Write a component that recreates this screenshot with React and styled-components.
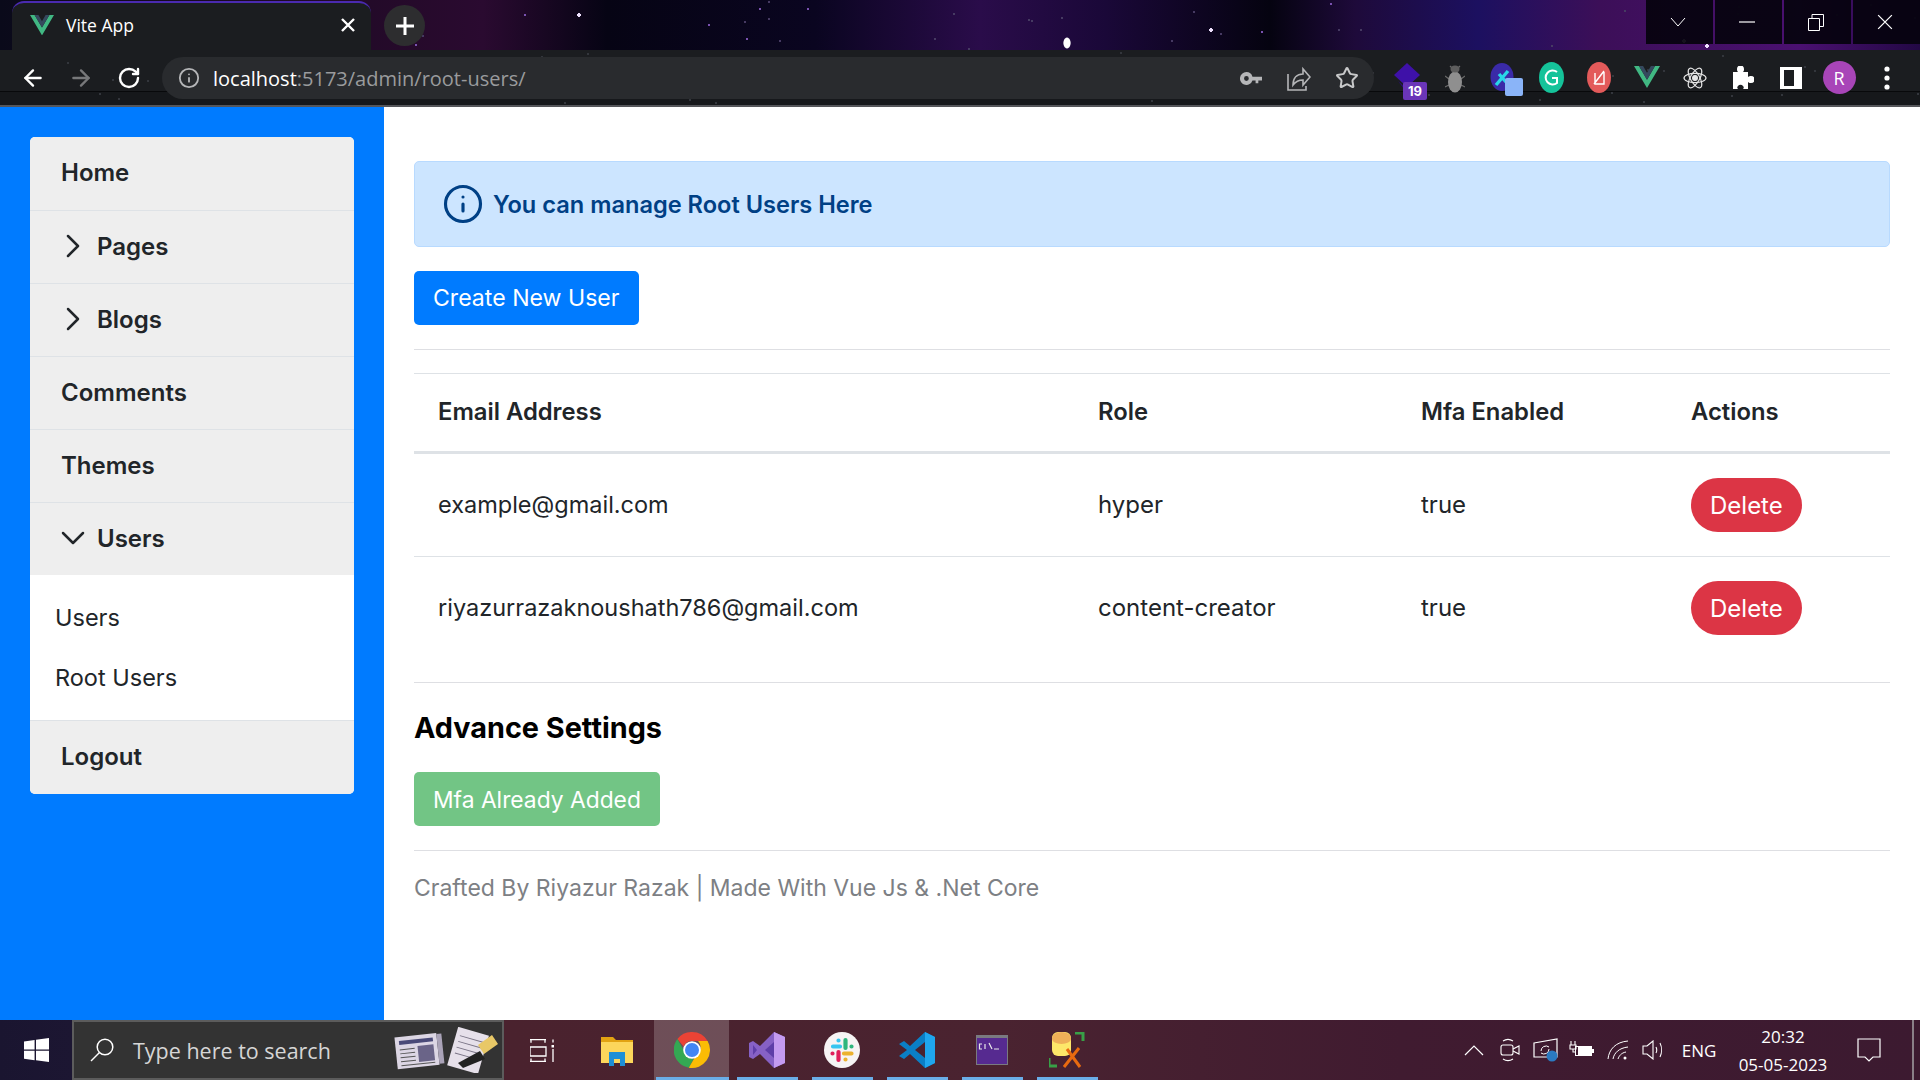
import React from "react";
import styled, { createGlobalStyle } from "styled-components";
import { ChevronRight, ChevronDown, Info, ArrowLeft, ArrowRight, RotateCw, Star } from "lucide-react";

const starField = (count, width, height, seed, faint) => {
  const spots = [];
  let n = seed;
  for (let i = 0; i < count; i++) {
    n = (n * 9301 + 49297) % 233280;
    const x = Math.round((n / 233280) * width);
    n = (n * 9301 + 49297) % 233280;
    const y = Math.round((n / 233280) * height);
    const bright = !faint && i % 9 === 0;
    const tone = faint ? "#33363c" : bright ? "#f0e2ff" : i % 3 === 0 ? "#7a52b0" : "#463a62";
    spots.push(`radial-gradient(circle ${bright ? 2 : 1}px at ${x}px ${y}px, ${tone} 99%, transparent)`);
  }
  return spots.join(",");
};

const GlobalStyle = createGlobalStyle`
  html, body {
    margin: 0;
    padding: 0;
    background: #fff;
  }
  * {
    box-sizing: border-box;
  }
  body {
    font-family: Inter, "Open Sans", sans-serif;
    color: #212529;
  }
`;

const Screen = styled.div`
  width: 1920px;
  height: 1080px;
  display: flex;
  flex-direction: column;
  overflow: hidden;
`;

// BROWSER CHROME
const BrowserFrame = styled.header`
  height: 107px;
  flex: none;
  display: flex;
  flex-direction: column;
  background-color: #0a0a1a;
`;

const TabStrip = styled.div`
  height: 50px;
  display: flex;
  align-items: flex-start;
  background-image: radial-gradient(ellipse 4px 6px at 1067px 43px, #fff 80%, transparent),
    ${starField(48, 1920, 50, 17)},
    linear-gradient(90deg, #0a0a1a 0, #250a2a 400px, #2a0a30 483px, #060414 607px, #0a0520 815px, #2a0c4a 980px, #1a0838 1105px, #050310 1270px, #1e0a3a 1355px, #1c1060 1478px, #3c0f58 1600px, #4a1070 1800px, #220844 1920px);
`;

const Tab = styled.div`
  width: 359px;
  height: 49px;
  margin: 1px 0 0 12px;
  padding: 0 16px 3px 18px;
  display: flex;
  align-items: center;
  gap: 12px;
  background: #1b1d20;
  border-top: 2px solid #4a2ab0;
  border-radius: 12px 12px 0 0;
  color: #fff;
  font-family: "Open Sans", sans-serif;
  font-size: 17.5px;
`;

const TabTitle = styled.span`
  flex: 1;
`;

const NewTab = styled.div`
  width: 41px;
  height: 41px;
  margin: 5px 0 0 13px;
  border-radius: 50%;
  background: #2d2d2f;
  display: flex;
  align-items: center;
  justify-content: center;
`;

const Caption = styled.div`
  margin-left: auto;
  display: flex;
  gap: 2px;
`;

const CaptionButton = styled.div`
  width: 67px;
  height: 44px;
  padding-right: 3px;
  background: rgba(6, 3, 15, 0.94);
  display: flex;
  align-items: center;
  justify-content: center;
`;

const Toolbar = styled.div`
  height: 57px;
  display: flex;
  align-items: flex-start;
  padding: 0 9px;
  border-bottom: 2px solid #55565a;
  background-image: ${starField(40, 1920, 55, 91, true)},
    linear-gradient(180deg, #1b1d20 0, #1b1d20 41px, #08090b 41px, #08090b 42px, #16181b 42px);
`;

const ToolSlot = styled.div`
  width: 48px;
  height: 55px;
  flex: none;
  display: flex;
  align-items: center;
  justify-content: center;
  position: relative;
`;

const Omnibox = styled.div`
  width: 1212px;
  height: 42px;
  margin: 7px 9px 0 9px;
  padding: 0 3px 0 16px;
  flex: none;
  display: flex;
  align-items: center;
  border-radius: 21px;
  background: #292b2e;
`;

const UrlText = styled.div`
  margin-left: 13px;
  flex: 1;
  font-family: "Open Sans", sans-serif;
  font-size: 20px;
  color: #9a9b9d;
  span {
    color: #fff;
  }
`;

const OmniAction = styled.div`
  width: 48px;
  display: flex;
  justify-content: center;
`;

const Badge = styled.span`
  position: absolute;
  left: 20px;
  top: 32px;
  width: 24px;
  height: 18px;
  border-radius: 2px;
  background: #6a35b8;
  color: #fff;
  font-size: 13px;
  font-weight: 700;
  text-align: center;
  line-height: 18px;
`;

const ExtSquare = styled.span`
  position: absolute;
  left: 26px;
  top: 28px;
  width: 18px;
  height: 18px;
  border-radius: 2px;
  background: #8ab4f8;
`;

const Avatar = styled.div`
  width: 33px;
  height: 33px;
  border-radius: 50%;
  background: #a845b8;
  color: #fff;
  font-family: "Open Sans", sans-serif;
  font-size: 18px;
  display: flex;
  align-items: center;
  justify-content: center;
`;

// PAGE
const Page = styled.div`
  flex: 1;
  min-height: 0;
  display: flex;
  background: #fff;
`;

const Sidebar = styled.aside`
  width: 384px;
  flex: none;
  padding: 30px;
  background: #007bff;
`;

const Menu = styled.nav`
  border-radius: 5px;
  overflow: hidden;
  background: #fff;
`;

const MenuRow = styled.div`
  height: 73px;
  padding-left: ${(props) => (props.$nested ? "23px" : "31px")};
  padding-bottom: 2px;
  display: flex;
  align-items: center;
  gap: 4px;
  background: #eee;
  font-size: 24px;
  font-weight: 600;
  color: #212529;
  & + & {
    border-top: 1px solid #dee2e6;
  }
`;

const SubMenu = styled.div`
  height: 145px;
  padding: 12px 0 0 25px;
`;

const LogoutRow = styled(MenuRow)`
  height: 74px;
  padding-left: 31px;
  border-top: 1px solid #dee2e6;
`;

const SubItem = styled.div`
  height: 60px;
  display: flex;
  align-items: center;
  font-size: 23.5px;
  color: #212529;
`;

const Content = styled.main`
  flex: 1;
  padding: 54px 30px 0;
`;

const Alert = styled.div`
  height: 86px;
  padding: 0 27px;
  display: flex;
  align-items: center;
  gap: 9px;
  background: #cce5ff;
  border: 1px solid #b8daff;
  border-radius: 5px;
  color: #004085;
  font-size: 23.6px;
  font-weight: 600;
`;

const Button = styled.button`
  height: 54px;
  padding: 0 19px;
  border: none;
  border-radius: ${(props) => (props.$pill ? "27px" : "5px")};
  background: ${(props) => props.$color};
  color: #fff;
  font-family: inherit;
  font-size: ${(props) => (props.$pill ? "24px" : "23.1px")};
  display: block;
`;

const CreateButton = styled(Button)`
  margin-top: 24px;
`;

const Rule = styled.hr`
  margin: ${(props) => props.$margin};
  border: none;
  border-top: 1px solid #dedfe3;
`;

const UsersTable = styled.table`
  width: 100%;
  table-layout: fixed;
  border-collapse: separate;
  border-spacing: 0;
  border-top: 1px solid #dee2e6;
`;

const HeadCell = styled.th`
  padding: 19px 24px 21px;
  line-height: 37px;
  text-align: left;
  font-size: 23.8px;
  font-weight: 600;
  color: #212529;
  border-bottom: 3px solid #dee2e6;
  width: ${(props) => props.$width};
`;

const Cell = styled.td`
  padding: 24px;
  font-size: 24px;
  color: #212529;
  border-bottom: ${(props) => (props.$last ? "none" : "1px solid #dee2e6")};
`;

const TextCell = styled(Cell)`
  padding-bottom: 26px;
`;

const EmailCell = styled(TextCell)`
  font-size: 23.5px;
`;

const SectionTitle = styled.h2`
  margin: 0;
  height: 40px;
  line-height: 40px;
  font-size: 28.8px;
  font-weight: 700;
  color: #000;
`;

const FadedButton = styled(Button)`
  margin-top: 24px;
  font-size: 22.8px;
  opacity: 0.65;
`;

const Footer = styled.div`
  font-size: 23px;
  line-height: 36px;
  color: #7d8084;
`;

// TASKBAR
const Taskbar = styled.footer`
  height: 60px;
  flex: none;
  display: flex;
  background: linear-gradient(90deg, #1a1530 0, #1c1632 72px, #4a222e 504px, #4a2330 1000px, #401b30 1400px, #3c1a30 1920px);
`;

const StartButton = styled.div`
  width: 72px;
  display: flex;
  align-items: center;
  justify-content: center;
`;

const SearchBox = styled.div`
  width: 432px;
  padding: 0 4px 0 16px;
  display: flex;
  align-items: center;
  gap: 19px;
  background: #333;
  border: 2px solid #5c5c5c;
  color: #d6d6d6;
  font-family: "Open Sans", sans-serif;
  font-size: 21.5px;
`;

const SearchText = styled.span`
  flex: 1;
`;

const TaskIcon = styled.div`
  width: 75px;
  position: relative;
  display: flex;
  align-items: center;
  justify-content: center;
  background: ${(props) => (props.$active ? "rgba(255,255,255,0.2)" : "transparent")};
  &::after {
    content: "";
    display: ${(props) => (props.$open ? "block" : "none")};
    position: absolute;
    bottom: 0;
    left: ${(props) => (props.$active ? "2px" : "8px")};
    right: ${(props) => (props.$active ? "0" : "6px")};
    height: 3px;
    background: #6aaee8;
  }
`;

const Tray = styled.div`
  margin-left: auto;
  display: flex;
  align-items: stretch;
  color: #fff;
  font-family: "Open Sans", sans-serif;
`;

const TraySlot = styled.div`
  width: 36px;
  display: flex;
  align-items: center;
  justify-content: center;
`;

const Lang = styled.div`
  width: 54px;
  display: flex;
  align-items: center;
  justify-content: center;
  font-size: 17px;
`;

const Clock = styled.div`
  width: 114px;
  display: flex;
  flex-direction: column;
  align-items: center;
  justify-content: center;
  gap: 5px;
  font-size: 17px;
  line-height: 23px;
`;

const Notify = styled.div`
  width: 58px;
  display: flex;
  align-items: center;
  justify-content: center;
`;

const ShowDesktop = styled.div`
  width: 8px;
  margin-left: 14px;
  border-left: 2px solid #8a7f88;
`;

// DRAWN ICONS
const VueLogo = ({ size = 24 }) => (
  <svg width={size} height={size * 0.85} viewBox="0 0 24 20.4">
    <polygon points="0,0 4.6,0 12,12.6 19.4,0 24,0 12,20.4" fill="#41b883" />
    <polygon points="4.6,0 8.4,0 12,6.2 15.6,0 19.4,0 12,12.6" fill="#35495e" />
  </svg>
);

const KeyIcon = () => (
  <svg width="22" height="15" viewBox="0 0 24 16" fill="#b5b6b8">
    <path d="M7 1a7 7 0 1 0 6.6 9.2H17v3h3v-3h4V6H13.6A7 7 0 0 0 7 1zm0 4.4a2.6 2.6 0 1 1 0 5.2 2.6 2.6 0 0 1 0-5.2z" />
  </svg>
);

const ShareIcon = () => (
  <svg width="24" height="28" viewBox="0 0 24 28" fill="none" stroke="#b5b6b8" strokeWidth="1.6">
    <path d="M1 10v16h18v-4" />
    <path d="M6 21c0-7 4-11 10-11V5l7 8-7 8v-5c-4 0-7 1-10 5z" />
  </svg>
);

const CloseIcon = ({ size = 14, width = 2.4 }) => (
  <svg width={size} height={size} viewBox="0 0 14 14" stroke="#fff" strokeWidth={width}>
    <path d="M1 1l12 12M13 1L1 13" />
  </svg>
);

const PlusIcon = () => (
  <svg width="20" height="20" viewBox="0 0 20 20" stroke="#fff" strokeWidth="3">
    <path d="M10 1v18M1 10h18" />
  </svg>
);

const CaptionChevron = () => (
  <svg width="16" height="10" viewBox="0 0 16 10" fill="none" stroke="#fff">
    <path d="M1 1l7 8 7-8" />
  </svg>
);

const CaptionMin = () => (
  <svg width="16" height="2" viewBox="0 0 16 2" stroke="#fff" strokeWidth="1.2">
    <path d="M0 1h16" />
  </svg>
);

const CaptionRestore = () => (
  <svg width="16" height="17" viewBox="0 0 16 17" fill="none" stroke="#fff">
    <path d="M.5 4.5h11v12H.5zM4 4.5V.5h11.5v12h-4" />
  </svg>
);

const DiamondExt = () => (
  <svg width="26" height="30" viewBox="0 0 26 30">
    <polygon points="13,0 26,12 13,24 0,12" fill="#3e11a8" />
    <polygon points="4,18 13,26 22,18 13,30" fill="#2a0d78" />
  </svg>
);

const BugExt = () => (
  <svg width="20" height="30" viewBox="0 0 20 30">
    <path d="M5 3l3 3M15 3l-3 3M0 13l4 3M20 13l-4 3M0 24l4-2M20 24l-4-2" stroke="#6a6a6a" strokeWidth="1.2" />
    <ellipse cx="10" cy="19" rx="7" ry="10.500" fill="#8f8f8f" />
    <ellipse cx="10" cy="6" rx="4.500" ry="3.500" fill="#5e5e5e" />
  </svg>
);

const CrossExt = () => (
  <svg width="26" height="32" viewBox="0 0 26 32">
    <ellipse cx="12" cy="15" rx="11.500" ry="14" fill="#3a2aa8" />
    <path d="M6 23L18 9M9 12l7 8" stroke="#29d6e8" strokeWidth="3.4" />
  </svg>
);

const GrammarlyExt = () => (
  <svg width="25" height="31" viewBox="0 0 25 31">
    <ellipse cx="12.500" cy="15.500" rx="12.500" ry="15.500" fill="#15c39a" />
    <path d="M18 10a7 7 0 1 0 0 11V16h-5" fill="none" stroke="#fff" strokeWidth="2" />
  </svg>
);

const RedExt = () => (
  <svg width="24" height="31" viewBox="0 0 24 31">
    <ellipse cx="12" cy="15.500" rx="12" ry="15.500" fill="#e35a5a" />
    <path d="M7 22L17 9M8 11v11h9V10" fill="none" stroke="#fff" strokeWidth="1.4" />
  </svg>
);

const ReactExt = () => (
  <svg width="24" height="26" viewBox="-12 -13 24 26" fill="none" stroke="#e6e6e6" strokeWidth="1.2">
    <ellipse rx="11" ry="4.600" />
    <ellipse rx="11" ry="4.600" transform="rotate(60)" />
    <ellipse rx="11" ry="4.600" transform="rotate(120)" />
    <circle r="2.400" fill="#e6e6e6" />
  </svg>
);

const PuzzleExt = () => (
  <svg width="22" height="24" viewBox="0 0 22 24" fill="#fff">
    <path d="M1 6h5c-1-1-1-2-1-3a3.400 3.400 0 0 1 7 0c0 1 0 2-1 3h5v5c1-1 2-1 3-1a3.400 3.400 0 0 1 0 7c-1 0-2 0-3-1v7h-5c1-1 1-2 0-3a3 3 0 0 0-5 0c-1 1-1 2 0 3H1z" />
  </svg>
);

const PanelExt = () => (
  <svg width="22" height="22" viewBox="0 0 22 22">
    <path d="M0 0h22v22H0zM4 3v16h10V3z" fill="#fff" fillRule="evenodd" />
  </svg>
);

const MoreExt = () => (
  <svg width="6" height="26" viewBox="0 0 6 26" fill="#fff">
    <circle cx="3" cy="4" r="2.600" />
    <circle cx="3" cy="13" r="2.600" />
    <circle cx="3" cy="22" r="2.600" />
  </svg>
);

const WindowsLogo = () => (
  <svg width="25" height="24" viewBox="0 0 25 24" fill="#fff">
    <path d="M0 3.400l10.600-1.500v9.500H0zM12 1.700L25 0v11.400H12zM0 12.800h10.600v9.400L0 20.700zM12 12.800h13V24l-13-1.800z" />
  </svg>
);

const MagnifierIcon = () => (
  <svg width="24" height="24" viewBox="0 0 24 24" fill="none" stroke="#fff" strokeWidth="1.5">
    <circle cx="15" cy="9" r="7.800" />
    <path d="M9.500 14.500L1 23" />
  </svg>
);

const NewsIcon = () => (
  <svg width="104" height="46" viewBox="0 0 104 46">
    <g transform="rotate(-6 24 24)">
      <rect x="2" y="8" width="42" height="32" fill="#dcd6e4" />
      <rect x="44" y="9" width="5" height="30" fill="#aaa3b8" />
      <rect x="6" y="12" width="34" height="4" fill="#4a4a78" />
      <rect x="24" y="19" width="16" height="16" fill="#6a6488" />
      <path d="M6 21h15M6 25h15M6 29h15M6 33h15M6 37h34" stroke="#555" strokeWidth="1" />
    </g>
    <g transform="rotate(16 76 24)">
      <rect x="58" y="4" width="32" height="40" fill="#e6e0ea" />
      <path d="M62 12h24M62 18h24M62 24h24M62 30h18" stroke="#7a7486" strokeWidth="1" />
    </g>
    <path d="M64 36l22-12 5 8-22 9z" fill="#222" />
    <path d="M84 18l14-10 6 9-14 10z" fill="#e8c867" />
  </svg>
);

const TaskViewIcon = () => (
  <svg width="24" height="23" viewBox="0 0 24 23" fill="none" stroke="#fff" strokeWidth="1.300">
    <path d="M0 .7h16M1 .7v3M15 .7v3M0 8h16v9H0zM1 19.500v3M15 19.500v3M0 22.300h16M23 .5v3M23 10v13" />
    <path d="M21.500 6h3v2.500h-3z" fill="#fff" stroke="none" />
  </svg>
);

const FolderIcon = () => (
  <svg width="32" height="32" viewBox="0 0 32 32">
    <path d="M0 3h12l3 3h17v5H0z" fill="#e2a312" />
    <rect y="8" width="32" height="21" fill="#fcd65b" />
    <path d="M8 32V18h16v14h-5v-7h-6v7z" fill="#1d8fd6" />
  </svg>
);

const ChromeIcon = () => (
  <svg width="36" height="36" viewBox="0 0 36 36">
    <path d="M18 0a18 18 0 0 1 15.600 9H18a9 9 0 0 0-8.400 5.600L3.400 7A18 18 0 0 1 18 0z" fill="#ea4335" />
    <path d="M3.400 7l7 12.200a9 9 0 0 0 9.400 7.600L14.800 35.700A18 18 0 0 1 3.400 7z" fill="#34a853" />
    <path d="M33.600 9A18 18 0 0 1 14.800 35.700l7.400-12.700A9 9 0 0 0 24 9z" fill="#fbbc05" />
    <circle cx="18" cy="18" r="8.800" fill="#fff" />
    <circle cx="18" cy="18" r="7" fill="#4285f4" />
  </svg>
);

const VisualStudioIcon = () => (
  <svg width="36" height="36" viewBox="0 0 36 36">
    <path d="M25 0l11 5v26l-11 5-14-14-7 5-4-2V11l4-2 7 5z" fill="#8661c5" />
    <path d="M25 0l11 5v26l-11 5z" fill="#c49bf0" />
    <path d="M25 10v16l-9-8zM4 13v10l4-5z" fill="#5e3ea8" />
  </svg>
);

const SlackIcon = () => (
  <svg width="36" height="36" viewBox="0 0 36 36" strokeWidth="4.200" strokeLinecap="round" fill="none">
    <circle cx="18" cy="18" r="18" fill="#f6f4f4" />
    <path d="M9 14.500h7M14.500 8.500h.01" stroke="#36c5f0" />
    <path d="M21.500 8v8M27.500 14.500h.01" stroke="#2eb67d" />
    <path d="M20 21.500h7.500M21.500 27.500h.01" stroke="#ecb22e" />
    <path d="M14.500 20v8M8.500 21.500h.01" stroke="#e01e5a" />
  </svg>
);

const VsCodeIcon = () => (
  <svg width="36" height="36" viewBox="0 0 36 36">
    <path d="M26 0l10 5v26l-10 5-15-14-6 5-5-3 8-6-8-6 5-3 6 5z" fill="#0a7fc6" />
    <path d="M26 0l10 5v26l-10 5z" fill="#1fa6ee" />
    <path d="M26 10v16l-10-8z" fill="#4a222e" />
  </svg>
);

const TerminalIcon = () => (
  <svg width="32" height="30" viewBox="0 0 32 30">
    <rect width="32" height="30" fill="#7a7a80" />
    <rect x="1" y="3" width="30" height="26" fill="#562a90" />
    <path d="M6 9H3.500v5H6M9 9v5M13 8l3 6M18 14h5" stroke="#e8e8e8" strokeWidth="1.200" fill="none" />
  </svg>
);

const DatabaseIcon = () => (
  <svg width="36" height="36" viewBox="0 0 36 36">
    <rect x="3" y="0" width="19" height="24" rx="6" fill="#fde769" />
    <path d="M3 6a9.500 6 0 0 1 19 0v1a9.500 5 0 0 1-19 0z" fill="#eeb058" />
    <path d="M26 1h8v8M0 26v8h8" fill="none" stroke="#38a047" strokeWidth="3" />
    <path d="M15 35l15-19M18 17l13 18" stroke="#e86a10" strokeWidth="3" fill="none" />
  </svg>
);

const TrayChevron = () => (
  <svg width="20" height="11" viewBox="0 0 20 11" fill="none" stroke="#fff" strokeWidth="1.200">
    <path d="M1 10l9-9 9 9" />
  </svg>
);

const CameraIcon = () => (
  <svg width="20" height="24" viewBox="0 0 20 24" fill="none" stroke="#fff" strokeWidth="1.100">
    <rect x="1" y="7" width="12" height="10" rx="2" />
    <path d="M13 11l6-3v8l-6-3M3 3c3-2 7-2 10 0M3 21c3 2 7 2 10 0" />
  </svg>
);

const SyncIcon = () => (
  <svg width="26" height="24" viewBox="0 0 26 24">
    <path d="M1 5l23-4v18H1z" fill="none" stroke="#fff" strokeWidth="1.200" />
    <path d="M8 13a5 5 0 0 1 8-4M16 11a5 5 0 0 1-8 4" fill="none" stroke="#fff" />
    <circle cx="19" cy="18" r="5.500" fill="#2b7ac2" />
  </svg>
);

const BatteryIcon = () => (
  <svg width="26" height="18" viewBox="0 0 26 18" fill="none" stroke="#fff">
    <path d="M2 0v4M6 0v4M1 4h6v4H1zM4 8v3h3" strokeWidth="1.100" />
    <rect x="6.500" y="5.500" width="16" height="9" />
    <rect x="9" y="6" width="13" height="8" fill="#fff" stroke="none" />
    <rect x="23" y="8" width="2" height="4" fill="#fff" stroke="none" />
  </svg>
);

const WifiIcon = () => (
  <svg width="22" height="20" viewBox="0 0 22 20" fill="none" stroke="#fff" strokeWidth="1">
    <path d="M1 19C2 9 9 2 21 1M6 19c1-6 6-11 15-12M11 19c1-3 3-6 8-7" />
    <circle cx="18" cy="18" r="1.500" fill="#fff" stroke="none" />
  </svg>
);

const VolumeIcon = () => (
  <svg width="24" height="20" viewBox="0 0 24 20" fill="none" stroke="#fff" strokeWidth="1.100">
    <path d="M1 6h4l6-5v18l-6-5H1zM14 7c1 2 1 4 0 6M18 3c2 4 2 10 0 14" />
  </svg>
);

const BubbleIcon = () => (
  <svg width="24" height="24" viewBox="0 0 24 24" fill="none" stroke="#fff" strokeWidth="1.200">
    <path d="M1 1h22v18h-7l-4 4-4-4H1z" />
  </svg>
);

const menuChevronProps = { size: 40, strokeWidth: 1.5, color: "#212529" };
const extensions = [
  <DiamondExt key="a" />,
  <BugExt key="b" />,
  <CrossExt key="c" />,
  <GrammarlyExt key="d" />,
  <RedExt key="e" />,
  <VueLogo key="f" size={26} />,
  <ReactExt key="g" />,
  <PuzzleExt key="h" />,
  <PanelExt key="i" />,
  <Avatar key="j">R</Avatar>,
  <MoreExt key="k" />,
];

const users = [
  { email: "example@gmail.com", role: "hyper", mfa: "true" },
  { email: "riyazurrazaknoushath786@gmail.com", role: "content-creator", mfa: "true" },
];

const App = () => {
  return (
    <Screen>
      <GlobalStyle />
      <BrowserFrame>
        <TabStrip>
          <Tab>
            <VueLogo />
            <TabTitle>Vite App</TabTitle>
            <CloseIcon />
          </Tab>
          <NewTab><PlusIcon /></NewTab>
          <Caption>
            <CaptionButton><CaptionChevron /></CaptionButton>
            <CaptionButton><CaptionMin /></CaptionButton>
            <CaptionButton><CaptionRestore /></CaptionButton>
            <CaptionButton><CloseIcon size={16} width={1.1} /></CaptionButton>
          </Caption>
        </TabStrip>
        <Toolbar>
          <ToolSlot><ArrowLeft size={26} color="#fff" strokeWidth={2.2} /></ToolSlot>
          <ToolSlot><ArrowRight size={26} color="#77787a" strokeWidth={2.2} /></ToolSlot>
          <ToolSlot><RotateCw size={24} color="#fff" strokeWidth={2.4} /></ToolSlot>
          <Omnibox>
            <Info size={22} color="#b5b6b8" strokeWidth={2} />
            <UrlText><span>localhost</span>:5173/admin/root-users/</UrlText>
            <OmniAction><KeyIcon /></OmniAction>
            <OmniAction><ShareIcon /></OmniAction>
            <OmniAction><Star size={24} color="#c8c9ca" strokeWidth={2} /></OmniAction>
          </Omnibox>
          {extensions.map((ext, i) => (
            <ToolSlot key={i}>
              {ext}
              {i === 0 && <Badge>19</Badge>}
              {i === 2 && <ExtSquare />}
            </ToolSlot>
          ))}
        </Toolbar>
      </BrowserFrame>

      <Page>
        <Sidebar>
          <Menu>
            <MenuRow>Home</MenuRow>
            <MenuRow $nested><ChevronRight {...menuChevronProps} />Pages</MenuRow>
            <MenuRow $nested><ChevronRight {...menuChevronProps} />Blogs</MenuRow>
            <MenuRow>Comments</MenuRow>
            <MenuRow>Themes</MenuRow>
            <MenuRow $nested><ChevronDown {...menuChevronProps} />Users</MenuRow>
            <SubMenu>
              <SubItem>Users</SubItem>
              <SubItem>Root Users</SubItem>
            </SubMenu>
            <LogoutRow>Logout</LogoutRow>
          </Menu>
        </Sidebar>

        <Content>
          <Alert>
            <Info size={42} color="#004085" strokeWidth={1.8} />
            You can manage Root Users Here
          </Alert>
          <CreateButton $color="#007bff">Create New User</CreateButton>
          <Rule $margin="24px 0 23px" />
          <UsersTable>
            <thead>
              <tr>
                <HeadCell $width="660px">Email Address</HeadCell>
                <HeadCell $width="323px">Role</HeadCell>
                <HeadCell $width="270px">Mfa Enabled</HeadCell>
                <HeadCell $width="223px">Actions</HeadCell>
              </tr>
            </thead>
            <tbody>
              {users.map((user, i) => {
                const last = i === users.length - 1;
                return (
                  <tr key={user.email}>
                    <EmailCell $last={last}>{user.email}</EmailCell>
                    <TextCell $last={last}>{user.role}</TextCell>
                    <TextCell $last={last}>{user.mfa}</TextCell>
                    <Cell $last={last}><Button $pill $color="#dc3545">Delete</Button></Cell>
                  </tr>
                );
              })}
            </tbody>
          </UsersTable>
          <Rule $margin="23px 0 25px" />
          <SectionTitle>Advance Settings</SectionTitle>
          <FadedButton $color="#28a745">Mfa Already Added</FadedButton>
          <Rule $margin="24px 0 19px" />
          <Footer>Crafted By Riyazur Razak | Made With Vue Js &amp; .Net Core</Footer>
        </Content>
      </Page>

      <Taskbar>
        <StartButton><WindowsLogo /></StartButton>
        <SearchBox>
          <MagnifierIcon />
          <SearchText>Type here to search</SearchText>
          <NewsIcon />
        </SearchBox>
        <TaskIcon><TaskViewIcon /></TaskIcon>
        <TaskIcon><FolderIcon /></TaskIcon>
        <TaskIcon $open $active><ChromeIcon /></TaskIcon>
        <TaskIcon $open><VisualStudioIcon /></TaskIcon>
        <TaskIcon $open><SlackIcon /></TaskIcon>
        <TaskIcon $open><VsCodeIcon /></TaskIcon>
        <TaskIcon $open><TerminalIcon /></TaskIcon>
        <TaskIcon $open><DatabaseIcon /></TaskIcon>
        <Tray>
          <TraySlot><TrayChevron /></TraySlot>
          <TraySlot><CameraIcon /></TraySlot>
          <TraySlot><SyncIcon /></TraySlot>
          <TraySlot><BatteryIcon /></TraySlot>
          <TraySlot><WifiIcon /></TraySlot>
          <TraySlot><VolumeIcon /></TraySlot>
          <Lang>ENG</Lang>
          <Clock>
            <span>20:32</span>
            <span>05-05-2023</span>
          </Clock>
          <Notify><BubbleIcon /></Notify>
          <ShowDesktop />
        </Tray>
      </Taskbar>
    </Screen>
  );
};

export default App;
